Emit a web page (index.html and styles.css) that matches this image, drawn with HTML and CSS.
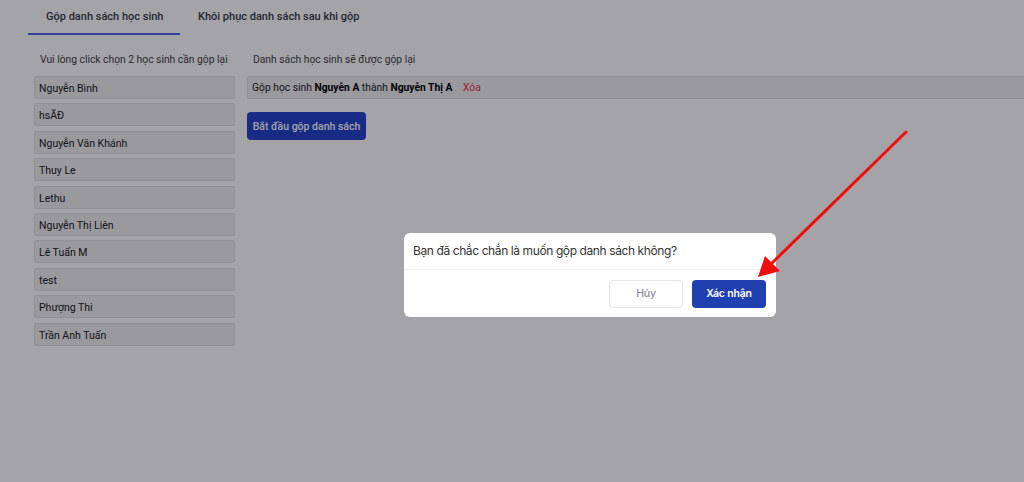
FILE: index.html
```html
<!DOCTYPE html>
<html lang="vi">
<head>
  <meta charset="UTF-8">
  <meta name="viewport" content="width=device-width, initial-scale=1.0">
  <title>Gộp danh sách học sinh</title>
  <link rel="stylesheet" href="styles.css">
</head>
<body>
  <div class="tabs">
    <a href="#" class="tab active">Gộp danh sách học sinh</a>
    <a href="#" class="tab">Khôi phục danh sách sau khi gộp</a>
  </div>

  <div class="merge">
    <div class="students">
      <p class="label">Vui lòng click chọn 2 học sinh cần gộp lại</p>
      <div class="student">Nguyễn Bình</div>
      <div class="student">hsÃĐ</div>
      <div class="student">Nguyễn Văn Khánh</div>
      <div class="student">Thuy Le</div>
      <div class="student">Lethu</div>
      <div class="student">Nguyễn Thị Liên</div>
      <div class="student">Lê Tuấn M</div>
      <div class="student">test</div>
      <div class="student">Phượng Thi</div>
      <div class="student">Trần Anh Tuấn</div>
    </div>
    <div class="pairs">
      <p class="label">Danh sách học sinh sẽ được gộp lại</p>
      <div class="pair">
        Gộp học sinh <b>Nguyễn A</b> thành <b>Nguyễn Thị A</b>
        <a href="#" class="remove">Xóa</a>
      </div>
      <button class="button">Bắt đầu gộp danh sách</button>
    </div>
  </div>

  <!-- confirm dialog -->
  <div class="backdrop">
    <div class="modal">
      <div class="modal-head">Bạn đã chắc chắn là muốn gộp danh sách không?</div>
      <div class="modal-foot">
        <button class="btn btn-cancel">Hủy</button>
        <button class="btn btn-ok">Xác nhận</button>
      </div>
    </div>
  </div>

  <svg class="pointer" width="1024" height="482" viewBox="0 0 1024 482">
    <line x1="906" y1="132" x2="771" y2="264" stroke="#f20d0d" stroke-width="3" stroke-linecap="round"/>
    <polygon points="758,277 765,256 780,271" fill="#f20d0d"/>
  </svg>
</body>
</html>
```

FILE: styles.css
```css
body {
  margin: 0;
  font-family: Roboto, 'Noto Sans', sans-serif;
  font-size: 10.5px;
  color: #333;
  background: #fff;
  overflow: hidden;
  height: 482px;
}
.tabs {
  display: flex;
  padding-left: 28px;
  height: 35px;
}
.tab {
  padding: 0 18px;
  line-height: 33px;
  font-weight: 500;
  font-size: 11px;
  color: #3a3d45;
  text-decoration: none;
  box-sizing: border-box;
  white-space: nowrap;
}
.tab.active {
  width: 152px;
  text-align: center;
  border-bottom: 2px solid #5468e6;
}
.merge {
  display: flex;
  gap: 12px;
  padding: 13px 0 0 34px;
}
.students {
  width: 201px;
  flex-shrink: 0;
}
.label {
  margin: 0 0 5px;
  padding-left: 6px;
  line-height: 23px;
  font-size: 10.3px;
  color: #444;
  white-space: nowrap;
}
.student {
  height: 23px;
  line-height: 23px;
  padding-left: 4px;
  margin-bottom: 4.4px;
  background: #efefef;
  border: 1px solid #e2e2e2;
  border-radius: 2px;
  box-sizing: border-box;
  color: #222;
}
.pairs {
  flex: 1;
  margin-right: -10px;
}
.pair {
  height: 23px;
  line-height: 21px;
  padding-left: 4px;
  font-size: 10.3px;
  background: #efefef;
  border: 1px solid #e2e2e2;
  border-radius: 2px;
  box-sizing: border-box;
  color: #222;
}
.pair b {
  color: #000;
  font-weight: 700;
}
.remove {
  color: #f03a4c;
  text-decoration: none;
  margin-left: 8px;
}
.button {
  margin-top: 13px;
  width: 119px;
  height: 28px;
  border: none;
  border-radius: 4px;
  background: #2845c8;
  color: #fff;
  font-family: Roboto, sans-serif;
  font-weight: 500;
  font-size: 10.5px;
  padding: 0;
  white-space: nowrap;
}
.backdrop {
  position: fixed;
  inset: 0;
  background: rgba(0, 1, 13, 0.36);
  display: flex;
  justify-content: center;
  align-items: center;
  padding: 67px 0 0 156px;
}
.modal {
  width: 372px;
  background: #fff;
  border-radius: 6px;
  font-family: Inter, Roboto, sans-serif;
}
.modal-head {
  height: 36px;
  line-height: 36px;
  padding-left: 9px;
  font-size: 12px;
  letter-spacing: -0.4px;
  color: #333;
  border-bottom: 1px solid #eef0f3;
}
.modal-foot {
  display: flex;
  justify-content: flex-end;
  gap: 9px;
  padding: 10px 10px 9px;
}
.btn {
  width: 74px;
  height: 28px;
  border-radius: 4px;
  font-family: Inter, Roboto, sans-serif;
  font-size: 10.5px;
  font-weight: 600;
  letter-spacing: -0.2px;
  padding: 0;
}
.btn-cancel {
  background: #fff;
  border: 1px solid #e3e5ea;
  color: #8a8f99;
  font-weight: 500;
}
.btn-ok {
  background: #2140b0;
  border: none;
  color: #fff;
}
.pointer {
  position: fixed;
  left: 0;
  top: 0;
  pointer-events: none;
}
```
